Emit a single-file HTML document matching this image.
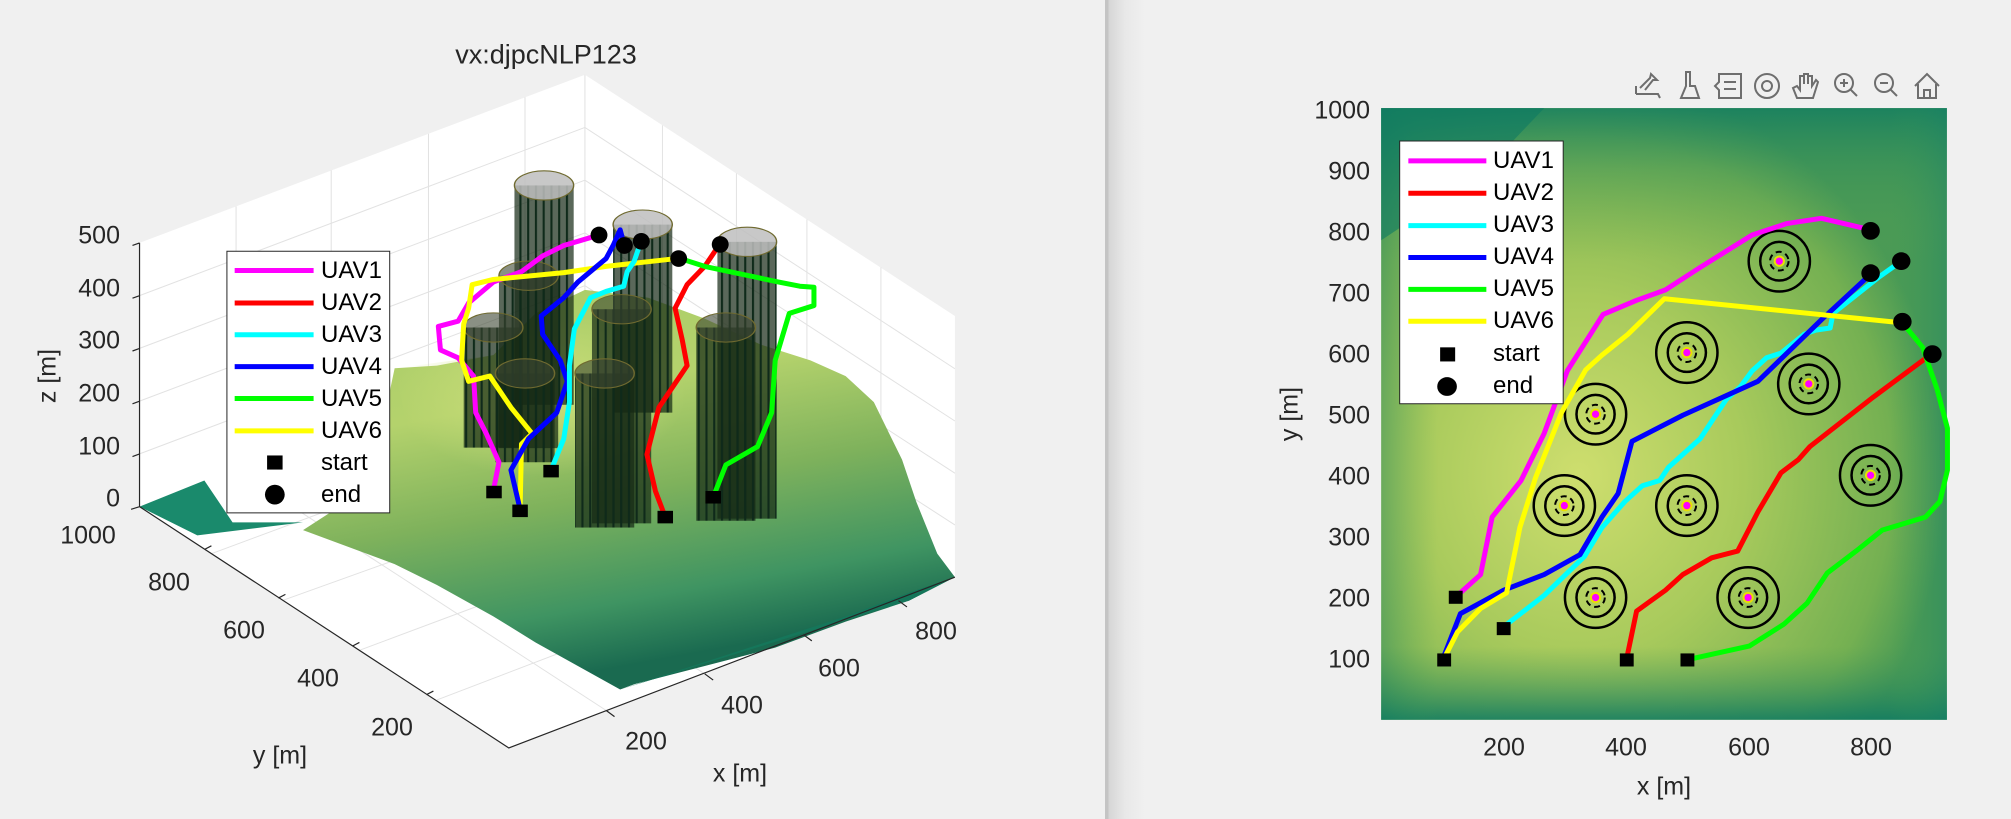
<!DOCTYPE html>
<html><head><meta charset="utf-8"><style>
html,body{margin:0;padding:0;}
body{width:2011px;height:819px;position:relative;overflow:hidden;background:#f0f0f0;font-family:"Liberation Sans",Arial,sans-serif;color:#262626;}
.p{position:absolute;top:0;height:819px;}
.t{position:absolute;font-size:25px;line-height:25px;white-space:nowrap;transform:translate(-50%,-50%);color:#262626;}
.r{position:absolute;font-size:25px;line-height:25px;white-space:nowrap;transform:translate(-100%,-50%);}
.lg{position:absolute;font-size:24px;line-height:24px;white-space:nowrap;transform:translateY(-50%);color:#000;}
svg{position:absolute;left:0;top:0;}
</style></head><body>
<div class="p" style="left:0;width:1105px;">
<svg width="1105" height="819" viewBox="0 0 1568 1568" preserveAspectRatio="none">
<defs>
<linearGradient id="tg" x1="0" y1="0" x2="0.3" y2="1">
<stop offset="0" stop-color="#a8cc68"/><stop offset="0.35" stop-color="#b4d26c"/><stop offset="0.6" stop-color="#7fb25c"/><stop offset="0.85" stop-color="#3f9462"/><stop offset="1" stop-color="#1a6a50"/></linearGradient>
<radialGradient id="tg2" cx="0.35" cy="0.45" r="0.35"><stop offset="0" stop-color="#cfe07c" stop-opacity="0.85"/><stop offset="1" stop-color="#cfe07c" stop-opacity="0"/></radialGradient>
<pattern id="vl" width="11" height="20" patternUnits="userSpaceOnUse"><rect width="11" height="20" fill="rgba(20,40,20,0.7)"/><rect x="0" width="3" height="20" fill="#0f2a1a"/></pattern>
</defs>
<polygon points="198,465 830,143 1355,605 1355,1105 722,1432 198,970" fill="#fff"/>
<g stroke="#e2e2e2" stroke-width="1" fill="none">
<path vector-effect="non-scaling-stroke" d="M198,566 L830,244 L1355,706 M198,667 L830,345 L1355,806 M198,768 L830,446 L1355,906 M198,869 L830,547 L1355,1005 M830,143 L830,648"/>
<path vector-effect="non-scaling-stroke" d="M335,395 L335,900 M470,326 L470,830 M608,256 L608,760 M745,186 L745,690 M940,240 L940,745 M1045,332 L1045,838 M1145,420 L1145,925 M1250,512 L1250,1015"/>
<path vector-effect="non-scaling-stroke" d="M335,900 L860,1360 M470,830 L1000,1290 M608,760 L1140,1215 M745,690 L1275,1150 M300,1060 L940,740 M400,1150 L1045,838 M510,1245 L1145,925 M620,1340 L1250,1015"/>
</g>
<polygon points="198,970 290,920 310,960 330,1000 430,1000 280,1025" fill="#1a8a6c"/>
<polygon points="430,1015 470,980 520,960 560,705 620,700 700,680 760,600 830,555 920,570 1000,610 1080,660 1150,690 1200,720 1240,770 1280,880 1300,960 1330,1060 1355,1105 1290,1150 1200,1190 1100,1240 1000,1275 900,1310 880,1320 760,1230 700,1180 620,1120 560,1080" fill="url(#tg)"/>
<polygon points="560,705 700,680 830,555 1000,610 1150,690 1100,900 800,1000 600,950" fill="url(#tg2)"/>
<polygon points="880,1320 1290,1150 1355,1105 1300,1130 1200,1180" fill="#15765a"/>
<g fill="url(#vl)">
<rect x="730" y="355" width="84" height="420"/><ellipse cx="772" cy="355" rx="42" ry="28" fill="rgba(190,190,190,0.85)" stroke="#6f6a30" stroke-width="2"/>
<rect x="870" y="430" width="84" height="360"/><ellipse cx="912" cy="430" rx="42" ry="28" fill="rgba(190,190,190,0.85)" stroke="#6f6a30" stroke-width="2"/>
<rect x="1018" y="463" width="84" height="530"/><ellipse cx="1060" cy="463" rx="42" ry="28" fill="rgba(190,190,190,0.85)" stroke="#6f6a30" stroke-width="2"/>
<rect x="708" y="528" width="84" height="330"/><ellipse cx="750" cy="528" rx="42" ry="28" fill="rgba(60,70,50,0.6)" stroke="#6f6a30" stroke-width="2"/>
<rect x="840" y="592" width="84" height="410"/><ellipse cx="882" cy="592" rx="42" ry="28" fill="rgba(60,70,50,0.6)" stroke="#6f6a30" stroke-width="2"/>
<rect x="658" y="627" width="84" height="230"/><ellipse cx="700" cy="627" rx="42" ry="28" fill="rgba(60,70,50,0.6)" stroke="#6f6a30" stroke-width="2"/>
<rect x="988" y="627" width="84" height="370"/><ellipse cx="1030" cy="627" rx="42" ry="28" fill="rgba(60,70,50,0.6)" stroke="#6f6a30" stroke-width="2"/>
<rect x="703" y="715" width="84" height="170"/><ellipse cx="745" cy="715" rx="42" ry="28" fill="rgba(60,70,50,0.6)" stroke="#6f6a30" stroke-width="2"/>
<rect x="816" y="715" width="84" height="295"/><ellipse cx="858" cy="715" rx="42" ry="28" fill="rgba(60,70,50,0.6)" stroke="#6f6a30" stroke-width="2"/>
</g>
<g fill="none" stroke-width="5" stroke-linejoin="round">
<polyline vector-effect="non-scaling-stroke" stroke="#ff00ff" points="700,940 708,885 690,830 675,790 672,720 650,685 625,670 622,625 650,615 665,580 700,540 740,520 770,490 800,470 850,450"/>
<polyline vector-effect="non-scaling-stroke" stroke="#ffff00" points="738,975 740,850 755,830 725,780 695,720 665,730 655,690 658,620 665,590 670,545 700,535 800,522 860,510 960,495"/>
<polyline vector-effect="non-scaling-stroke" stroke="#0000ff" points="738,975 725,900 750,840 790,790 805,730 795,690 770,640 768,605 800,570 820,540 860,495 870,470 880,440 885,465"/>
<polyline vector-effect="non-scaling-stroke" stroke="#00ffff" points="782,900 800,840 808,770 808,700 815,630 838,570 860,558 885,548 890,520 900,500 910,460"/>
<polyline vector-effect="non-scaling-stroke" stroke="#ff0000" points="944,990 930,940 918,870 935,780 975,700 968,650 958,590 975,545 1000,510 1020,470"/>
<polyline vector-effect="non-scaling-stroke" stroke="#00ff00" points="1012,952 1030,890 1075,855 1095,790 1100,690 1120,600 1155,585 1155,550 1135,548 1105,540 1000,510 965,495"/>
</g>
<g fill="#000">
<ellipse cx="850" cy="450" rx="12" ry="16"/><ellipse cx="886" cy="470" rx="12" ry="16"/><ellipse cx="910" cy="462" rx="12" ry="16"/><ellipse cx="963" cy="495" rx="12" ry="16"/><ellipse cx="1022" cy="468" rx="12" ry="16"/>
<rect x="690" y="930" width="22" height="24"/><rect x="727" y="966" width="22" height="24"/><rect x="771" y="890" width="22" height="24"/><rect x="933" y="978" width="22" height="24"/><rect x="1001" y="940" width="22" height="24"/>
</g>
<g stroke="#262626" stroke-width="1.2" fill="none">
<path vector-effect="non-scaling-stroke" d="M198,465 L198,970 L722,1432 L1355,1105 M198,465 L188,470 M198,566 L188,571 M198,667 L188,672 M198,768 L188,773 M198,869 L188,874 M198,970 L186,975 M290,1052 L300,1045 M395,1145 L405,1138 M500,1237 L510,1230 M605,1330 L615,1323 M860,1360 L872,1372 M1000,1290 L1012,1302 M1140,1215 L1152,1227 M1275,1150 L1287,1162"/>
</g>
<rect x="322" y="481" width="231" height="501" fill="#fff" stroke="#262626" stroke-width="1" vector-effect="non-scaling-stroke"/>
<g stroke-width="5">
<line vector-effect="non-scaling-stroke" x1="333" y1="518" x2="445" y2="518" stroke="#ff00ff"/>
<line vector-effect="non-scaling-stroke" x1="333" y1="580" x2="445" y2="580" stroke="#ff0000"/>
<line vector-effect="non-scaling-stroke" x1="333" y1="641" x2="445" y2="641" stroke="#00ffff"/>
<line vector-effect="non-scaling-stroke" x1="333" y1="702" x2="445" y2="702" stroke="#0000ff"/>
<line vector-effect="non-scaling-stroke" x1="333" y1="763" x2="445" y2="763" stroke="#00ff00"/>
<line vector-effect="non-scaling-stroke" x1="333" y1="825" x2="445" y2="825" stroke="#ffff00"/>
</g>
<rect x="379" y="872" width="22" height="27" fill="#000"/><ellipse cx="390" cy="947" rx="14" ry="19" fill="#000"/>
</svg>
<div class="t" style="left:546px;top:55px;font-size:27px;">vx:djpcNLP123</div>
<div class="r" style="left:120px;top:236px;">500</div>
<div class="r" style="left:120px;top:289px;">400</div>
<div class="r" style="left:120px;top:341px;">300</div>
<div class="r" style="left:120px;top:394px;">200</div>
<div class="r" style="left:120px;top:447px;">100</div>
<div class="r" style="left:120px;top:499px;">0</div>
<div class="t" style="left:88px;top:536px;">1000</div>
<div class="t" style="left:169px;top:583px;">800</div>
<div class="t" style="left:244px;top:631px;">600</div>
<div class="t" style="left:318px;top:679px;">400</div>
<div class="t" style="left:392px;top:728px;">200</div>
<div class="t" style="left:646px;top:742px;">200</div>
<div class="t" style="left:742px;top:706px;">400</div>
<div class="t" style="left:839px;top:669px;">600</div>
<div class="t" style="left:936px;top:632px;">800</div>
<div class="t" style="left:48px;top:376px;transform:translate(-50%,-50%) rotate(-90deg);">z [m]</div>
<div class="t" style="left:280px;top:756px;">y [m]</div>
<div class="t" style="left:740px;top:774px;">x [m]</div>
<div class="lg" style="left:321px;top:271px;">UAV1</div>
<div class="lg" style="left:321px;top:303px;">UAV2</div>
<div class="lg" style="left:321px;top:335px;">UAV3</div>
<div class="lg" style="left:321px;top:367px;">UAV4</div>
<div class="lg" style="left:321px;top:399px;">UAV5</div>
<div class="lg" style="left:321px;top:431px;">UAV6</div>
<div class="lg" style="left:321px;top:463px;">start</div>
<div class="lg" style="left:321px;top:495px;">end</div>
</div>

<div class="p" style="left:1105px;width:906px;background:linear-gradient(90deg,#c4c4c4 0,#c4c4c4 3px,#d6d6d6 4px,#e8e8e8 20px,#f0f0f0 40px);">
<svg width="906" height="819" viewBox="0 0 1568 1568" preserveAspectRatio="none">
<defs>
<radialGradient id="m1" cx="0.35" cy="0.6" r="0.65"><stop offset="0" stop-color="#cede6e"/><stop offset="0.45" stop-color="#a8ca5c"/><stop offset="0.85" stop-color="#74b052"/><stop offset="1" stop-color="#4a9a55"/></radialGradient>
<linearGradient id="m2" x1="0" y1="0" x2="0" y2="1"><stop offset="0" stop-color="#0d7a62" stop-opacity="0.75"/><stop offset="0.1" stop-color="#2a8a5c" stop-opacity="0.35"/><stop offset="0.25" stop-color="#5fa451" stop-opacity="0"/><stop offset="0.88" stop-color="#4a9a56" stop-opacity="0"/><stop offset="1" stop-color="#0f7a62" stop-opacity="0.85"/></linearGradient>
<linearGradient id="m3" x1="0" y1="0" x2="1" y2="0"><stop offset="0" stop-color="#0d7a62" stop-opacity="0.35"/><stop offset="0.1" stop-color="#3a9858" stop-opacity="0"/><stop offset="0.9" stop-color="#3a9858" stop-opacity="0"/><stop offset="1" stop-color="#15806a" stop-opacity="0.35"/></linearGradient>
</defs>
<rect x="478" y="207" width="979" height="1171" fill="url(#m1)"/>
<rect x="478" y="207" width="979" height="1171" fill="url(#m2)"/>
<rect x="478" y="207" width="979" height="1171" fill="url(#m3)"/>
<polygon points="478,207 760,207 680,300 560,400 478,460" fill="#0d7a62" opacity="0.6"/>
<g fill="none" stroke="#000" stroke-width="2.5">
<ellipse vector-effect="non-scaling-stroke" cx="1167" cy="500" rx="53" ry="58"/><ellipse vector-effect="non-scaling-stroke" cx="1167" cy="500" rx="33" ry="37"/>
<ellipse vector-effect="non-scaling-stroke" cx="1007" cy="675" rx="53" ry="58"/><ellipse vector-effect="non-scaling-stroke" cx="1007" cy="675" rx="33" ry="37"/>
<ellipse vector-effect="non-scaling-stroke" cx="1218" cy="735" rx="53" ry="58"/><ellipse vector-effect="non-scaling-stroke" cx="1218" cy="735" rx="33" ry="37"/>
<ellipse vector-effect="non-scaling-stroke" cx="849" cy="793" rx="53" ry="58"/><ellipse vector-effect="non-scaling-stroke" cx="849" cy="793" rx="33" ry="37"/>
<ellipse vector-effect="non-scaling-stroke" cx="795" cy="968" rx="53" ry="58"/><ellipse vector-effect="non-scaling-stroke" cx="795" cy="968" rx="33" ry="37"/>
<ellipse vector-effect="non-scaling-stroke" cx="1007" cy="968" rx="53" ry="58"/><ellipse vector-effect="non-scaling-stroke" cx="1007" cy="968" rx="33" ry="37"/>
<ellipse vector-effect="non-scaling-stroke" cx="1325" cy="910" rx="53" ry="58"/><ellipse vector-effect="non-scaling-stroke" cx="1325" cy="910" rx="33" ry="37"/>
<ellipse vector-effect="non-scaling-stroke" cx="849" cy="1144" rx="53" ry="58"/><ellipse vector-effect="non-scaling-stroke" cx="849" cy="1144" rx="33" ry="37"/>
<ellipse vector-effect="non-scaling-stroke" cx="1113" cy="1144" rx="53" ry="58"/><ellipse vector-effect="non-scaling-stroke" cx="1113" cy="1144" rx="33" ry="37"/>
</g>
<g fill="none" stroke="#000" stroke-width="2" stroke-dasharray="6 4">
<ellipse vector-effect="non-scaling-stroke" cx="1167" cy="500" rx="16" ry="18"/><ellipse vector-effect="non-scaling-stroke" cx="1007" cy="675" rx="16" ry="18"/><ellipse vector-effect="non-scaling-stroke" cx="1218" cy="735" rx="16" ry="18"/><ellipse vector-effect="non-scaling-stroke" cx="849" cy="793" rx="16" ry="18"/><ellipse vector-effect="non-scaling-stroke" cx="795" cy="968" rx="16" ry="18"/><ellipse vector-effect="non-scaling-stroke" cx="1007" cy="968" rx="16" ry="18"/><ellipse vector-effect="non-scaling-stroke" cx="1325" cy="910" rx="16" ry="18"/><ellipse vector-effect="non-scaling-stroke" cx="849" cy="1144" rx="16" ry="18"/><ellipse vector-effect="non-scaling-stroke" cx="1113" cy="1144" rx="16" ry="18"/>
</g>
<g fill="#ff00ff" stroke="#e8e000" stroke-width="2">
<ellipse vector-effect="non-scaling-stroke" cx="1167" cy="500" rx="8" ry="9"/><ellipse vector-effect="non-scaling-stroke" cx="1007" cy="675" rx="8" ry="9"/><ellipse vector-effect="non-scaling-stroke" cx="1218" cy="735" rx="8" ry="9"/><ellipse vector-effect="non-scaling-stroke" cx="849" cy="793" rx="8" ry="9"/><ellipse vector-effect="non-scaling-stroke" cx="795" cy="968" rx="8" ry="9"/><ellipse vector-effect="non-scaling-stroke" cx="1007" cy="968" rx="8" ry="9"/><ellipse vector-effect="non-scaling-stroke" cx="1325" cy="910" rx="8" ry="9"/><ellipse vector-effect="non-scaling-stroke" cx="849" cy="1144" rx="8" ry="9"/><ellipse vector-effect="non-scaling-stroke" cx="1113" cy="1144" rx="8" ry="9"/>
</g>
<g fill="none" stroke-width="5" stroke-linejoin="round">
<polyline vector-effect="non-scaling-stroke" stroke="#ff00ff" points="607,1143 650,1100 670,990 720,920 760,830 800,710 862,602 920,575 970,555 1030,512 1120,450 1180,428 1240,418 1325,440"/>
<polyline vector-effect="non-scaling-stroke" stroke="#ff0000" points="903,1260 920,1170 970,1130 1000,1100 1050,1068 1095,1055 1130,980 1170,905 1200,880 1220,855 1330,760 1430,678"/>
<polyline vector-effect="non-scaling-stroke" stroke="#00ffff" points="690,1200 760,1140 830,1065 860,1010 900,960 930,930 960,920 975,895 1030,840 1075,765 1100,740 1120,710 1145,685 1170,676 1210,640 1230,632 1255,628 1260,600 1340,530 1378,500"/>
<polyline vector-effect="non-scaling-stroke" stroke="#0000ff" points="587,1255 615,1175 690,1130 760,1100 822,1062 860,990 888,945 912,845 1000,795 1130,730 1200,655 1240,612 1325,525"/>
<polyline vector-effect="non-scaling-stroke" stroke="#00ff00" points="1008,1263 1115,1237 1175,1195 1215,1155 1250,1097 1300,1055 1345,1015 1420,990 1445,960 1458,900 1458,820 1440,745 1415,665 1380,618"/>
<polyline vector-effect="non-scaling-stroke" stroke="#ffff00" points="587,1260 610,1210 650,1165 695,1135 718,1010 745,915 790,790 832,708 860,680 905,640 968,572 1378,618"/>
</g>
<g fill="#000">
<ellipse cx="1325" cy="442" rx="16" ry="17"/><ellipse cx="1325" cy="523" rx="16" ry="17"/><ellipse cx="1378" cy="500" rx="16" ry="17"/><ellipse cx="1380" cy="616" rx="16" ry="17"/><ellipse cx="1432" cy="678" rx="16" ry="17"/>
<rect x="595" y="1131" width="24" height="25"/><rect x="575" y="1251" width="24" height="25"/><rect x="678" y="1191" width="24" height="25"/><rect x="891" y="1251" width="24" height="25"/><rect x="996" y="1251" width="24" height="25"/>
</g>
<rect x="510" y="270" width="283" height="503" fill="#fff" stroke="#262626" stroke-width="1" vector-effect="non-scaling-stroke"/>
<g stroke-width="5">
<line vector-effect="non-scaling-stroke" x1="525" y1="308" x2="660" y2="308" stroke="#ff00ff"/>
<line vector-effect="non-scaling-stroke" x1="525" y1="370" x2="660" y2="370" stroke="#ff0000"/>
<line vector-effect="non-scaling-stroke" x1="525" y1="432" x2="660" y2="432" stroke="#00ffff"/>
<line vector-effect="non-scaling-stroke" x1="525" y1="493" x2="660" y2="493" stroke="#0000ff"/>
<line vector-effect="non-scaling-stroke" x1="525" y1="554" x2="660" y2="554" stroke="#00ff00"/>
<line vector-effect="non-scaling-stroke" x1="525" y1="615" x2="660" y2="615" stroke="#ffff00"/>
</g>
<rect x="580" y="665" width="26" height="27" fill="#000"/><ellipse cx="592" cy="740" rx="17" ry="18" fill="#000"/>
</svg>
<svg width="906" height="819" viewBox="0 0 906 819">
<g fill="none" stroke="#6e6e6e" stroke-width="2">
<path d="M531,94 L553,94 L555,98 M531,94 L531,86 M535,88 L545,78 L546,74 L552,80 L548,80 L540,90"/>
<path d="M580,72 L586,72 M581,72 L581,86 L576,98 L594,98 L590,86 L585,86 L585,72"/>
<path d="M614,74 L636,74 L636,98 L614,98 L614,90 L610,86 L614,82 Z M619,82 L631,82 M619,89 L631,89"/>
<circle cx="662" cy="86" r="12"/><circle cx="662" cy="86" r="5"/>
<path d="M692,98 L688,88 L692,86 L695,90 L695,76 L699,76 L699,84 L699,74 L703,74 L703,84 L703,76 L707,76 L707,86 L711,80 L713,82 L708,98 Z"/>
<circle cx="739" cy="83" r="9"/><path d="M735,83 L743,83 M739,79 L739,87 M745,89 L752,96"/>
<circle cx="779" cy="83" r="9"/><path d="M775,83 L783,83 M785,89 L792,96"/>
<path d="M810,86 L822,74 L834,86 M813,84 L813,98 L831,98 L831,84 M819,98 L819,90 L825,90 L825,98"/>
</g>
</svg>
<div class="r" style="left:265px;top:111px;">1000</div>
<div class="r" style="left:265px;top:172px;">900</div>
<div class="r" style="left:265px;top:233px;">800</div>
<div class="r" style="left:265px;top:294px;">700</div>
<div class="r" style="left:265px;top:355px;">600</div>
<div class="r" style="left:265px;top:416px;">500</div>
<div class="r" style="left:265px;top:477px;">400</div>
<div class="r" style="left:265px;top:538px;">300</div>
<div class="r" style="left:265px;top:599px;">200</div>
<div class="r" style="left:265px;top:660px;">100</div>
<div class="t" style="left:399px;top:748px;">200</div>
<div class="t" style="left:521px;top:748px;">400</div>
<div class="t" style="left:644px;top:748px;">600</div>
<div class="t" style="left:766px;top:748px;">800</div>
<div class="t" style="left:559px;top:787px;">x [m]</div>
<div class="t" style="left:185px;top:414px;transform:translate(-50%,-50%) rotate(-90deg);">y [m]</div>
<div class="lg" style="left:388px;top:161px;">UAV1</div>
<div class="lg" style="left:388px;top:193px;">UAV2</div>
<div class="lg" style="left:388px;top:225px;">UAV3</div>
<div class="lg" style="left:388px;top:257px;">UAV4</div>
<div class="lg" style="left:388px;top:289px;">UAV5</div>
<div class="lg" style="left:388px;top:321px;">UAV6</div>
<div class="lg" style="left:388px;top:354px;">start</div>
<div class="lg" style="left:388px;top:386px;">end</div>
</div>
</body></html>
